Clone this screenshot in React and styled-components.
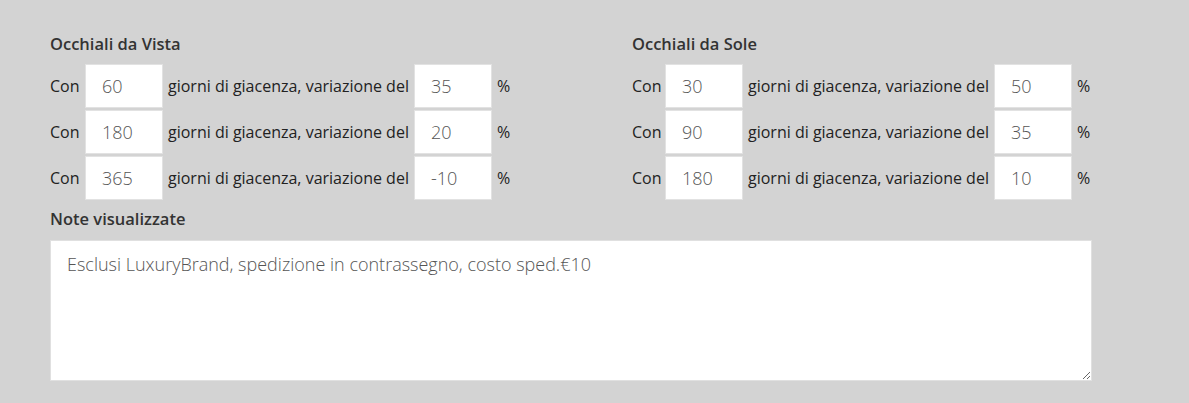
import React from "react";
import styled, { createGlobalStyle } from "styled-components";

const Global = createGlobalStyle`
  html, body { margin: 0; padding: 0; background: #d3d3d3; }
  body { font-family: "Open Sans", "Noto Sans", sans-serif; color: #333; }
`;

const Page = styled.div`
  width: 1189px;
  height: 403px;
  box-sizing: border-box;
  padding: 33px 0 0 50px;
  background: #d3d3d3;
`;

const Columns = styled.div`
  display: grid;
  grid-template-columns: 582px 460px;
`;

const Section = styled.div`
  display: flex;
  flex-direction: column;
`;

const Heading = styled.div`
  font-size: 16.5px;
  font-weight: 600;
  line-height: 22px;
  height: 31px;
  color: #333;
`;

const Rows = styled.div`
  display: flex;
  flex-direction: column;
  gap: 2px;
`;

const Row = styled.div`
  display: flex;
  align-items: center;
  height: 44px;
  font-size: 16px;
`;

const Label = styled.span`
  width: ${(p) => p.$w}px;
  flex: none;
  color: #222;
`;

const Text = styled.span`
  margin: 0 5px;
  color: #222;
  white-space: nowrap;
`;

const NumInput = styled.input`
  width: 78px;
  height: 44px;
  box-sizing: border-box;
  border: 1px solid #e2e2e2;
  background: #fff;
  padding: 0 0 0 16px;
  font-family: "Open Sans", sans-serif;
  font-weight: 300;
  font-size: 18px;
  color: #555;
  outline: none;
`;

const NoteHeading = styled(Heading)`
  margin-top: 8px;
  height: 32px;
`;

const Note = styled.textarea`
  display: block;
  width: 1042px;
  height: 141px;
  box-sizing: border-box;
  border: 1px solid #e0e0e0;
  background: #fff;
  padding: 11px 16px;
  font-family: "Open Sans", sans-serif;
  font-weight: 300;
  font-size: 18px;
  color: #555;
  outline: none;
  resize: vertical;
`;

const data = [
  {
    title: "Occhiali da Vista",
    con: 35,
    rows: [
      ["60", "35"],
      ["180", "20"],
      ["365", "-10"],
    ],
  },
  {
    title: "Occhiali da Sole",
    con: 33,
    rows: [
      ["30", "50"],
      ["90", "35"],
      ["180", "10"],
    ],
  },
];

export default function App() {
  return (
    <Page>
      <Global />
      <Columns>
        {data.map((s) => (
          <Section key={s.title}>
            <Heading>{s.title}</Heading>
            <Rows>
              {s.rows.map(([d, v], i) => (
                <Row key={i}>
                  <Label $w={s.con}>Con</Label>
                  <NumInput defaultValue={d} />
                  <Text>giorni di giacenza, variazione del</Text>
                  <NumInput defaultValue={v} />
                  <Text>%</Text>
                </Row>
              ))}
            </Rows>
          </Section>
        ))}
      </Columns>
      <NoteHeading>Note visualizzate</NoteHeading>
      <Note defaultValue="Esclusi LuxuryBrand, spedizione in contrassegno, costo sped.€10" />
    </Page>
  );
}
